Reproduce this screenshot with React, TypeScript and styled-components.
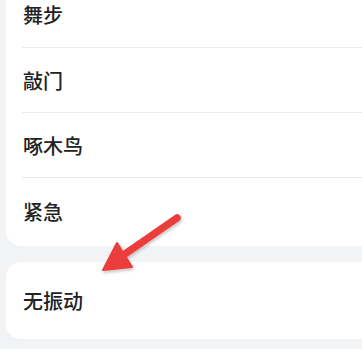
import React from "react";
import styled, { createGlobalStyle } from "styled-components";

const Global = createGlobalStyle`
  html, body { margin: 0; padding: 0; background: #f2f3f5; overflow: hidden; }
  body { font-family: "Noto Sans CJK SC", "Noto Sans", sans-serif; }
`;

const Page = styled.div`
  position: relative;
  width: 362px;
  height: 349px;
  overflow: hidden;
  background: #f2f3f5;
`;

const Stack = styled.div`
  display: flex;
  flex-direction: column;
  gap: 16px;
  margin-top: -18px;
  padding-left: 6px;
  margin-right: -20px;
`;

const Card = styled.div`
  background: #ffffff;
  border-radius: 15px;
  display: flex;
  flex-direction: column;
`;

const Row = styled.div<{ $h: number; $divider?: boolean }>`
  height: ${(p) => p.$h}px;
  display: flex;
  align-items: center;
  padding-left: 17px;
  font-size: 20px;
  font-weight: 500;
  color: #222224;
  box-sizing: border-box;
  position: relative;

  &::after {
    content: "";
    display: ${(p) => (p.$divider ? "block" : "none")};
    position: absolute;
    left: 16px;
    right: 0;
    bottom: 0;
    height: 1.5px;
    background: #ebebed;
  }
`;

const Label = styled.span`
  line-height: 1;
`;

const Arrow = styled.svg`
  position: absolute;
  left: 0;
  top: 0;
  pointer-events: none;
`;

export default function App() {
  return (
    <>
      <Global />
      <Page>
        <Stack>
          <Card>
            <Row $h={66} $divider>
              <Label>舞步</Label>
            </Row>
            <Row $h={65} $divider>
              <Label>敲门</Label>
            </Row>
            <Row $h={65} $divider>
              <Label>啄木鸟</Label>
            </Row>
            <Row $h={68}>
              <Label>紧急</Label>
            </Row>
          </Card>
          <Card>
            <Row $h={77}>
              <Label>无振动</Label>
            </Row>
          </Card>
        </Stack>
        <Arrow width="362" height="349" viewBox="0 0 362 349">
          <defs>
            <filter id="sh" x="-20%" y="-20%" width="140%" height="140%">
              <feDropShadow dx="1" dy="2" stdDeviation="1.5" floodColor="#000" floodOpacity="0.22" />
            </filter>
          </defs>
          <g filter="url(#sh)" fill="#ec3d3d" stroke="#ec3d3d">
            <line x1="177" y1="218" x2="122" y2="256" strokeWidth="7.5" strokeLinecap="round" />
            <polygon points="103,270 117,243 132,267" strokeWidth="2" strokeLinejoin="round" />
          </g>
        </Arrow>
      </Page>
    </>
  );
}
